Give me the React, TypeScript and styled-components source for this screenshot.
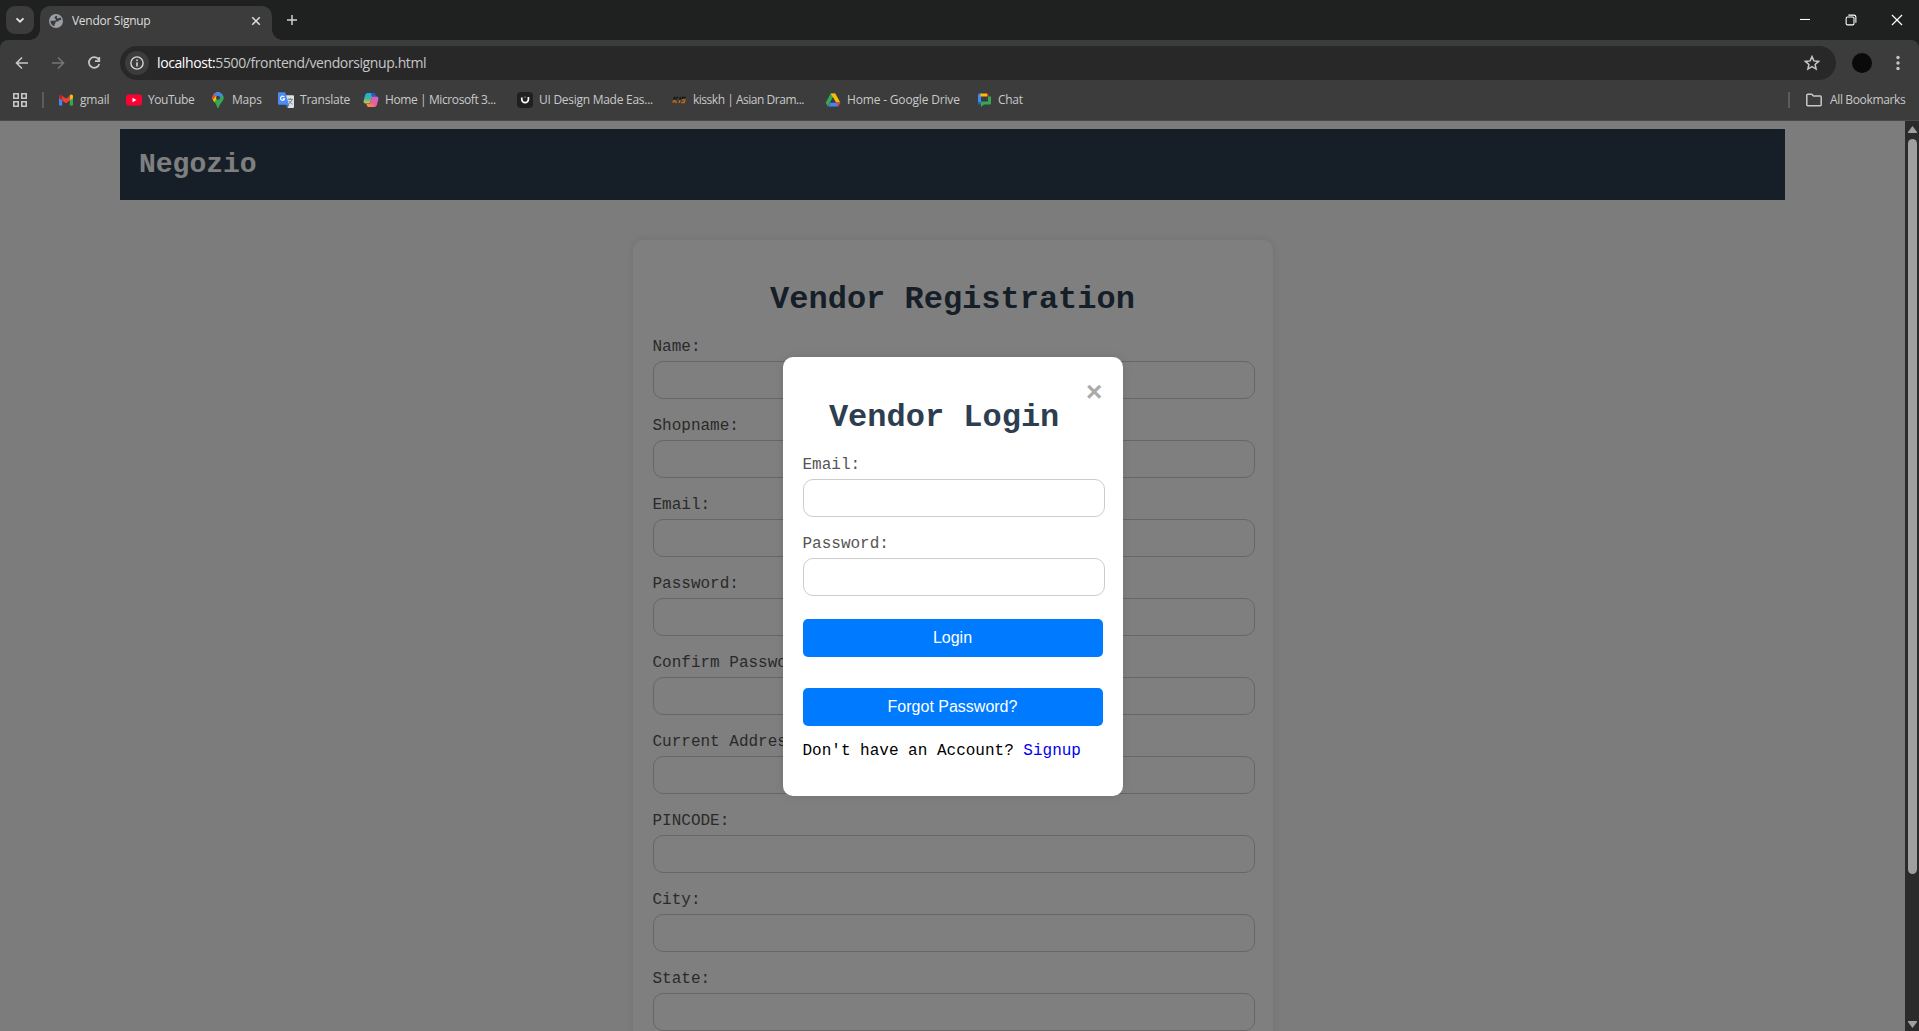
import React from "react";
import styled, { createGlobalStyle } from "styled-components";

const ui = `"Open Sans", "Noto Sans", sans-serif`;
const mono = `"Liberation Mono", "Courier New", monospace`;

const Global = createGlobalStyle`
  body { margin: 0; overflow: hidden; }
  *, *::before, *::after { box-sizing: border-box; }
`;

const Window = styled.div`
  height: 1031px;
  display: flex;
  flex-direction: column;
  background: #1f2121;
  font-family: ${ui};
  color: #dedede;
  overflow: hidden;
`;

/* ---------- browser frame ---------- */
const TabStrip = styled.div`
  height: 40px;
  flex: none;
  display: flex;
  padding: 6px 0 0 6px;
`;
const TabSearch = styled.div`
  width: 28px;
  height: 28px;
  border-radius: 9px;
  background: #3c3c3c;
  display: grid;
  place-items: center;
  margin-right: 6px;
`;
const Tab = styled.div`
  position: relative;
  width: 232px;
  height: 34px;
  background: #3c3c3c;
  border-radius: 10px 10px 0 0;
  display: flex;
  align-items: center;
  padding: 0 11px 5px 9px;
  &::before, &::after {
    content: "";
    position: absolute;
    bottom: 0;
    width: 10px;
    height: 10px;
  }
  &::before { left: -10px; background: radial-gradient(circle at 0 0, transparent 9.5px, #3c3c3c 10px); }
  &::after { right: -10px; background: radial-gradient(circle at 100% 0, transparent 9.5px, #3c3c3c 10px); }
`;
const UiText = styled.span<{ $w: number; $ls?: number; $size?: number }>`
  flex: none;
  width: ${(p) => p.$w}px;
  font-size: ${(p) => p.$size ?? 12}px;
  letter-spacing: ${(p) => p.$ls ?? -0.2}px;
  line-height: 18px;
  white-space: nowrap;
`;
const TabTitle = styled(UiText)`
  margin: 0 auto 0 9px;
`;
const NewTab = styled.div`
  display: flex;
  padding: 9px 0 0 15px;
`;
const WinControls = styled.div`
  margin-left: auto;
  display: flex;
  gap: 34px;
  padding: 8px 16px 0 0;
`;
const Toolbar = styled.div`
  height: 46px;
  flex: none;
  display: flex;
  align-items: center;
  background: #3c3c3c;
  border-radius: 8px 8px 0 0;
  padding: 0 13px 0 14px;
`;
const NavButtons = styled.div`
  display: flex;
  gap: 20px;
  width: 106px;
`;
const Address = styled.div`
  width: 1716px;
  height: 34px;
  border-radius: 17px;
  background: #282828;
  display: flex;
  align-items: center;
  padding: 0 16px 0 5px;
`;
const SiteInfo = styled.div`
  width: 24px;
  height: 24px;
  border-radius: 50%;
  background: #3c3c3c;
  display: grid;
  place-items: center;
  margin-right: 8px;
`;
const Url = styled.span`
  font-size: 14px;
  letter-spacing: -0.4px;
  line-height: 20px;
  margin-right: auto;
  color: #c7c7c7;
  b { font-weight: 400; color: #fff; }
`;
const Avatar = styled.div`
  width: 20px;
  height: 20px;
  border-radius: 50%;
  background: #0a0a0a;
  margin: 0 18px 0 16px;
`;
const Bookmarks = styled.div`
  height: 35px;
  flex: none;
  display: flex;
  align-items: center;
  background: #3c3c3c;
  border-bottom: 1px solid #4a4a4a;
  padding: 0 13px 6px 12px;
  color: #c9c9c9;
`;
const Divider = styled.i`
  width: 2px;
  height: 16px;
  background: #5c5c5c;
`;
const BookmarkList = styled.div`
  display: flex;
  margin-left: 14px;
`;
const Bookmark = styled.div<{ $w: number }>`
  width: ${(p) => p.$w}px;
  display: flex;
  align-items: center;
  gap: 6px;
`;
const AllBookmarks = styled.div`
  margin-left: auto;
  display: flex;
  align-items: center;
  svg { margin: 0 8px 0 16px; }
`;

/* ---------- document ---------- */
const Viewport = styled.div`
  position: relative;
  flex: 1;
  min-height: 0;
  display: flex;
`;
const Page = styled.main`
  width: 1905px;
  background: #f9f9f9;
  padding: 8px 120px 0;
  overflow: hidden;
  font-family: ${mono};
  font-size: 16px;
`;
const Navbar = styled.header`
  height: 71px;
  background: #2c3e50;
  color: #fff;
  padding: 20px 19px;
  font-size: 28px;
  line-height: 31px;
  font-weight: 700;
`;
const Card = styled.section`
  width: 640px;
  height: 1100px;
  margin: 40px auto 0;
  padding: 21px 20px;
  background: #fff;
  border-radius: 10px;
  box-shadow: 0 0 10px rgba(0, 0, 0, 0.1);
`;
const Title = styled.h1`
  margin: 21px 0 20px;
  height: 36px;
  line-height: 36px;
  font-size: 32px;
  color: #2c3e50;
  text-align: center;
`;
const Field = styled.label`
  display: flex;
  flex-direction: column;
  height: 79px;
  color: #555;
  line-height: 18px;
  gap: 5px;
`;
const Input = styled.input`
  height: 38px;
  width: calc(100% + 2px);
  flex: none;
  border: 1px solid #ccc;
  border-radius: 10px;
  background: #fff;
  padding: 10px;
  outline: none;
`;
const Overlay = styled.div`
  position: absolute;
  inset: 0 14px 0 0;
  background: rgba(0, 0, 0, 0.5);
  display: flex;
  justify-content: center;
  align-items: flex-start;
  padding-top: 236px;
  font-family: ${mono};
  font-size: 16px;
`;
const Modal = styled.section`
  width: 340px;
  height: 439px;
  background: #fff;
  border-radius: 10px;
  padding: 20px;
  color: #000;
  box-shadow: 0 0 10px rgba(0, 0, 0, 0.1);
`;
const ModalHead = styled.div`
  display: flex;
  height: 79px;
`;
const ModalTitle = styled(Title)`
  flex: 1;
  margin: 23px 0 0;
`;
const Close = styled.span`
  color: #aaa;
  font-size: 28px;
  line-height: 33px;
  font-weight: 700;
`;
const Button = styled.button`
  display: block;
  width: 300px;
  height: 38px;
  border: 0;
  border-radius: 5px;
  background: #007bff;
  color: #fff;
  font: 16px/18px "Liberation Sans", Arial, sans-serif;
  padding: 0;
  margin: 5px 0 31px;
`;
const SignupLine = styled.p`
  margin: -15px 0 0;
  line-height: 18px;
  white-space: nowrap;
  a { color: #0000ee; text-decoration: none; }
`;
const Scrollbar = styled.div`
  width: 14px;
  background: #2b2b2b;
  display: flex;
  flex-direction: column;
  align-items: center;
  padding: 5px 0 3px 1px;
`;
const Thumb = styled.div`
  width: 9px;
  height: 735px;
  margin: 6px 0 auto;
  border-radius: 5px;
  background: #9f9f9f;
`;

/* ---------- icons ---------- */
const Svg = ({ s = 16, children }: { s?: number; children: React.ReactNode }) => (
  <svg width={s} height={s} viewBox="0 0 16 16" fill="none" style={{ flex: "none" }}>{children}</svg>
);
const Gmail = () => (
  <Svg>
    <path d="M1 4.5v8.2c0 .5.4.8.8.8h2.4V7z" fill="#4285f4" />
    <path d="M15 4.5v8.2c0 .5-.4.8-.8.8h-2.4V7z" fill="#34a853" />
    <path d="M11.8 4.2v4.2L15 6V4.4c0-1.7-1.8-2.4-3.2-1.3z" fill="#fbbc04" />
    <path d="M1 4.4V6l3.2 2.4V3.900l-.9-.8C2.400 2.500 1 2.900 1 4.400z" fill="#c5221f" />
    <path d="M4.200 8.400V3.800L8 6.700l3.800-2.900v4.600L8 11.200z" fill="#ea4335" />
  </Svg>
);
const YouTube = () => (
  <Svg><rect y="2.500" width="16" height="11" rx="2.800" fill="#ff0033" /><path d="M6.500 5.700v4.600L10.500 8z" fill="#fff" /></Svg>
);
const Maps = () => (
  <Svg>
    <defs><clipPath id="pin"><path d="M8 .3a5.500 5.500 0 0 0-5.500 5.500c0 4 3.900 5 4.600 9.100.2 1 1.600 1 1.800 0 .7-4.100 4.600-5.100 4.600-9.100A5.500 5.500 0 0 0 8 .3z" /></clipPath></defs>
    <g clipPath="url(#pin)">
      <path d="M0 0h16v16H0z" fill="#34a853" />
      <path d="M0 0h10L8 5.500 3 11.500 0 8z" fill="#fbbc04" />
      <path d="M0 0h8l-2 3.800L2.500 8H0z" fill="#ea4335" />
      <path d="M3.800 0H16v2.500L10 8 8 5.500 3.500 2z" fill="#4285f4" />
      <path d="M12.800 2.500 16 2v6l-8 8H6l1-5z" fill="#34a853" />
    </g>
    <circle cx="8" cy="5.800" r="2" fill="#3c3c3c" />
  </Svg>
);
const Translate = () => (
  <Svg>
    <path d="M6 3.200h9a1 1 0 0 1 1 1V15a1 1 0 0 1-1 1H9.500z" fill="#dedede" />
    <path d="M9.800 7.300h5M12.200 6v1.300M14 7.300c-.5 2.300-2 3.800-3.700 4.700M11 9c.8 1.500 2 2.500 3.500 3" stroke="#6a7f83" />
    <path d="M1 .3h6.200L11 12.700H1a1 1 0 0 1-1-1V1.300a1 1 0 0 1 1-1z" fill="#4c8bf5" />
    <path d="m7.500 12.700 2 3.300 1.600-3.300z" fill="#3367d6" />
    <path d="M6.400 5.200a2.100 2.100 0 1 0 .2 1.700H4.700" stroke="#fff" strokeWidth="1.100" />
  </Svg>
);
const Copilot = () => (
  <Svg>
    <defs>
      <linearGradient id="cpa" x1="0" y1="0" x2="0" y2="1"><stop stopColor="#22a7f2" /><stop offset=".55" stopColor="#40b79a" /><stop offset="1" stopColor="#f2c230" /></linearGradient>
      <linearGradient id="cpb" x1="1" y1="0" x2="0" y2="1"><stop stopColor="#b565f0" /><stop offset=".5" stopColor="#ef5d94" /><stop offset="1" stopColor="#ff9a45" /></linearGradient>
    </defs>
    <path d="M4.800 1h5.500c1 0 1.500.6 1.800 1.500l.4 1.300h-1.600c-1 0-1.600.5-1.900 1.500L7.300 10c-.3 1-.8 1.500-1.800 1.500H2.700C.8 11.500.2 10.200.8 8l1.300-4.800C2.600 1.700 3.500 1 4.800 1z" fill="url(#cpa)" />
    <path d="M11.200 15H5.700c-1 0-1.500-.6-1.800-1.500l-.5-1.500h2c1 0 1.600-.5 1.900-1.500L8.700 6c.3-1 .8-1.500 1.800-1.500h2.800c1.900 0 2.500 1.300 1.900 3.500l-1.300 4.800c-.5 1.500-1.400 2.200-2.700 2.200z" fill="url(#cpb)" />
    <path d="M8 1h2.300c1 0 1.500.6 1.800 1.500l.4 1.300h-1.600c-1 0-1.600.5-1.900 1.500z" fill="#2755c8" />
  </Svg>
);
const UiDesign = () => (
  <Svg><rect width="16" height="16" rx="4" fill="#202020" /><path d="M4.800 5.600v1.800a3.300 3.300 0 0 0 6.600 0V5" stroke="#fff" strokeWidth="1.700" /><path d="M8 4.500v1.400" stroke="#aaa" strokeWidth="1" /></Svg>
);
const Kisskh = () => (
  <Svg>
    <g transform="translate(3 0) skewX(-12)" strokeWidth="1.500">
      <path d="M1.500 4.800v3M5 4.800 2 7.800M7.500 4.800v3M12.800 5.400H9.800V7.600" stroke="#171717" />
      <path d="M1.500 8v3M2 8l3 3M7.500 8v3M9.500 8h3v2.400H9.300" stroke="#b86714" />
    </g>
  </Svg>
);
const Drive = () => (
  <Svg>
    <path d="M5.700 1.500h4.600L5.300 10l-2.500 4.500L.7 10.700z" fill="#34a853" />
    <path d="M5.700 1.500h4.600l5 9H11z" fill="#fbbc04" />
    <path d="M3.200 14.500 5.400 10.500h9.900l-2.200 4z" fill="#4285f4" />
    <path d="M10.800 10.500h4.500l-2.200 4z" fill="#ea4335" />
    <path d="M8 5.500 5.300 10.500h5.400z" fill="#3c3c3c" />
  </Svg>
);
const Chat = () => (
  <Svg>
    <path d="M2 3a1.500 1.500 0 0 1 1.500-1.500H5v9H2z" fill="#4285f4" />
    <path d="M4.500 1.500H11v3H4.500z" fill="#fbbc04" />
    <path d="M11 1.500A1.500 1.500 0 0 1 12.500 3v1.500H11z" fill="#ea4335" />
    <path d="M12 4.500h3V11a1.500 1.500 0 0 1-1.500 1.500H8L5 15V9.500h7z" fill="#34a853" />
    <path d="M2 10.500h3v2H3.500A1.500 1.500 0 0 1 2 11z" fill="#1967d2" />
  </Svg>
);

const bookmarks: { icon: React.FC; text: string; w: number; t: number; ls?: number }[] = [
  { icon: Gmail, text: "gmail", w: 68, t: 30 },
  { icon: YouTube, text: "YouTube", w: 84, t: 46, ls: -0.45 },
  { icon: Maps, text: "Maps", w: 68, t: 30 },
  { icon: Translate, text: "Translate", w: 85, t: 47, ls: -0.22 },
  { icon: Copilot, text: "Home | Microsoft 3...", w: 154, t: 112, ls: -0.4 },
  { icon: UiDesign, text: "UI Design Made Eas...", w: 154, t: 115, ls: -0.27 },
  { icon: Kisskh, text: "kisskh | Asian Dram...", w: 154, t: 113, ls: -0.48 },
  { icon: Drive, text: "Home - Google Drive", w: 151, t: 114, ls: -0.17 },
  { icon: Chat, text: "Chat", w: 60, t: 25, ls: -0.3 },
];

const fields = ["Name:", "Shopname:", "Email:", "Password:", "Confirm Password:", "Current Address:", "PINCODE:", "City:", "State:"];

export default function App() {
  return (
    <Window>
      <Global />
      <TabStrip>
        <TabSearch><Svg><path d="m4.500 6.300 3.500 3.400 3.500-3.400" stroke="#e3e3e3" strokeWidth="1.800" /></Svg></TabSearch>
        <Tab>
          <Svg s={14}>
            <circle cx="8" cy="8" r="8" fill="#9aa0a6" />
            <path d="M9.800 1.900c-2.300.1-3.500 1-3.500 2.300 0 1.200 1.700.8 1.700 2.200 0 1-.9 1.300-2.200 1.300H1.700a6.400 6.400 0 0 0 4.600 6.400v-1.700c0-1 1-.9 1-2 0-1.300 1-1.800 2.300-1.800 1.800 0 1.400-1.700 2.900-1.700h1.800a6.400 6.400 0 0 0-1.600-3.200c-.8.9-1.600 1.300-2.600 1.300-.8 0-1.100-.7-1.100-1.400z" fill="#3c3c3c" />
          </Svg>
          <TabTitle $w={90} $ls={-0.28}>Vendor Signup</TabTitle>
          <Svg s={10}><path d="m2 2 12 12M14 2 2 14" stroke="#dedede" strokeWidth="2.500" /></Svg>
        </Tab>
        <NewTab><Svg s={10}><path d="M8 0v16M0 8h16" stroke="#d0d0d0" strokeWidth="2.400" /></Svg></NewTab>
        <WinControls>
          <Svg s={12}><path d="M1.300 7.300h13.400" stroke="#fff" strokeWidth="1.400" /></Svg>
          <Svg s={12}><rect x="1.500" y="4" width="10.500" height="10.500" rx="1.800" stroke="#fff" strokeWidth="1.400" /><path d="M4.500 1.500h7.300c1.700 0 2.700 1 2.700 2.700v7.300" stroke="#fff" strokeWidth="1.400" /></Svg>
          <Svg s={12}><path d="m1.300 1.300 13.400 13.400M14.700 1.300 1.300 14.700" stroke="#fff" strokeWidth="1.600" /></Svg>
        </WinControls>
      </TabStrip>

      <Toolbar>
        <NavButtons>
          <Svg><path d="M14 8H3M8 2.500 2.500 8 8 13.500" stroke="#c7c7c7" strokeWidth="1.600" /></Svg>
          <Svg><path d="M2 8h11M8 2.500 13.500 8 8 13.500" stroke="#757575" strokeWidth="1.600" /></Svg>
          <Svg><path d="M12.600 4.500A5.300 5.300 0 1 0 13.300 9M13.300 2v4.200H9" stroke="#c7c7c7" strokeWidth="1.700" /></Svg>
        </NavButtons>
        <Address>
          <SiteInfo><Svg s={14}><circle cx="8" cy="8" r="7" stroke="#d5d5d5" strokeWidth="1.600" /><path d="M8 7.200V12M8 4v1.800" stroke="#d5d5d5" strokeWidth="1.800" /></Svg></SiteInfo>
          <Url><b>localhost:</b>5500/frontend/vendorsignup.html</Url>
          <Svg><path d="m8 1.600 1.900 4.300 4.700.5-3.500 3.100 1 4.600L8 11.700l-4.100 2.400 1-4.600L1.400 6.400l4.700-.5z" stroke="#c7c7c7" strokeWidth="1.500" /></Svg>
        </Address>
        <Avatar />
        <Svg><circle cx="8" cy="2.500" r="1.700" fill="#c7c7c7" /><circle cx="8" cy="8" r="1.700" fill="#c7c7c7" /><circle cx="8" cy="13.500" r="1.700" fill="#c7c7c7" /></Svg>
      </Toolbar>

      <Bookmarks>
        <Svg><path d="M1.800 1.800h4.400v4.400H1.800zM9.800 1.800h4.400v4.400H9.800zM1.800 9.800h4.400v4.400H1.800zM9.800 9.800h4.400v4.400H9.800z" stroke="#c7c7c7" strokeWidth="1.600" /></Svg>
        <Divider style={{ marginLeft: 14 }} />
        <BookmarkList>
          {bookmarks.map(({ icon: Icon, text, w, t, ls }) => (
            <Bookmark key={text} $w={w}><Icon /><UiText $w={t} $ls={ls}>{text}</UiText></Bookmark>
          ))}
        </BookmarkList>
        <AllBookmarks>
          <Divider />
          <Svg><path d="M.8 3.200c0-.5.4-.9.900-.9h4l1.800 1.800h6.800c.5 0 .9.400.9.900v7.800c0 .5-.4.900-.9.900H1.700c-.5 0-.9-.4-.9-.9z" stroke="#c7c7c7" strokeWidth="1.500" /></Svg>
          <UiText $w={76} $ls={-0.36}>All Bookmarks</UiText>
        </AllBookmarks>
      </Bookmarks>

      <Viewport>
        <Page>
          <Navbar>Negozio</Navbar>
          <Card>
            <Title>Vendor Registration</Title>
            {fields.map((f) => <Field key={f}>{f}<Input /></Field>)}
          </Card>
        </Page>
        <Scrollbar>
          <svg width="9" height="7"><path d="M4.500 0 9 6v1H0V6z" fill="#9f9f9f" /></svg>
          <Thumb />
          <svg width="9" height="7"><path d="M4.500 7 9 1V0H0v1z" fill="#9f9f9f" /></svg>
        </Scrollbar>
        <Overlay>
          <Modal>
            <ModalHead>
              <ModalTitle>Vendor Login</ModalTitle>
              <Close>&times;</Close>
            </ModalHead>
            <Field>Email:<Input /></Field>
            <Field>Password:<Input type="password" /></Field>
            <Button>Login</Button>
            <Button>Forgot Password?</Button>
            <SignupLine>Don't have an Account? <a>Signup</a></SignupLine>
          </Modal>
        </Overlay>
      </Viewport>
    </Window>
  );
}
